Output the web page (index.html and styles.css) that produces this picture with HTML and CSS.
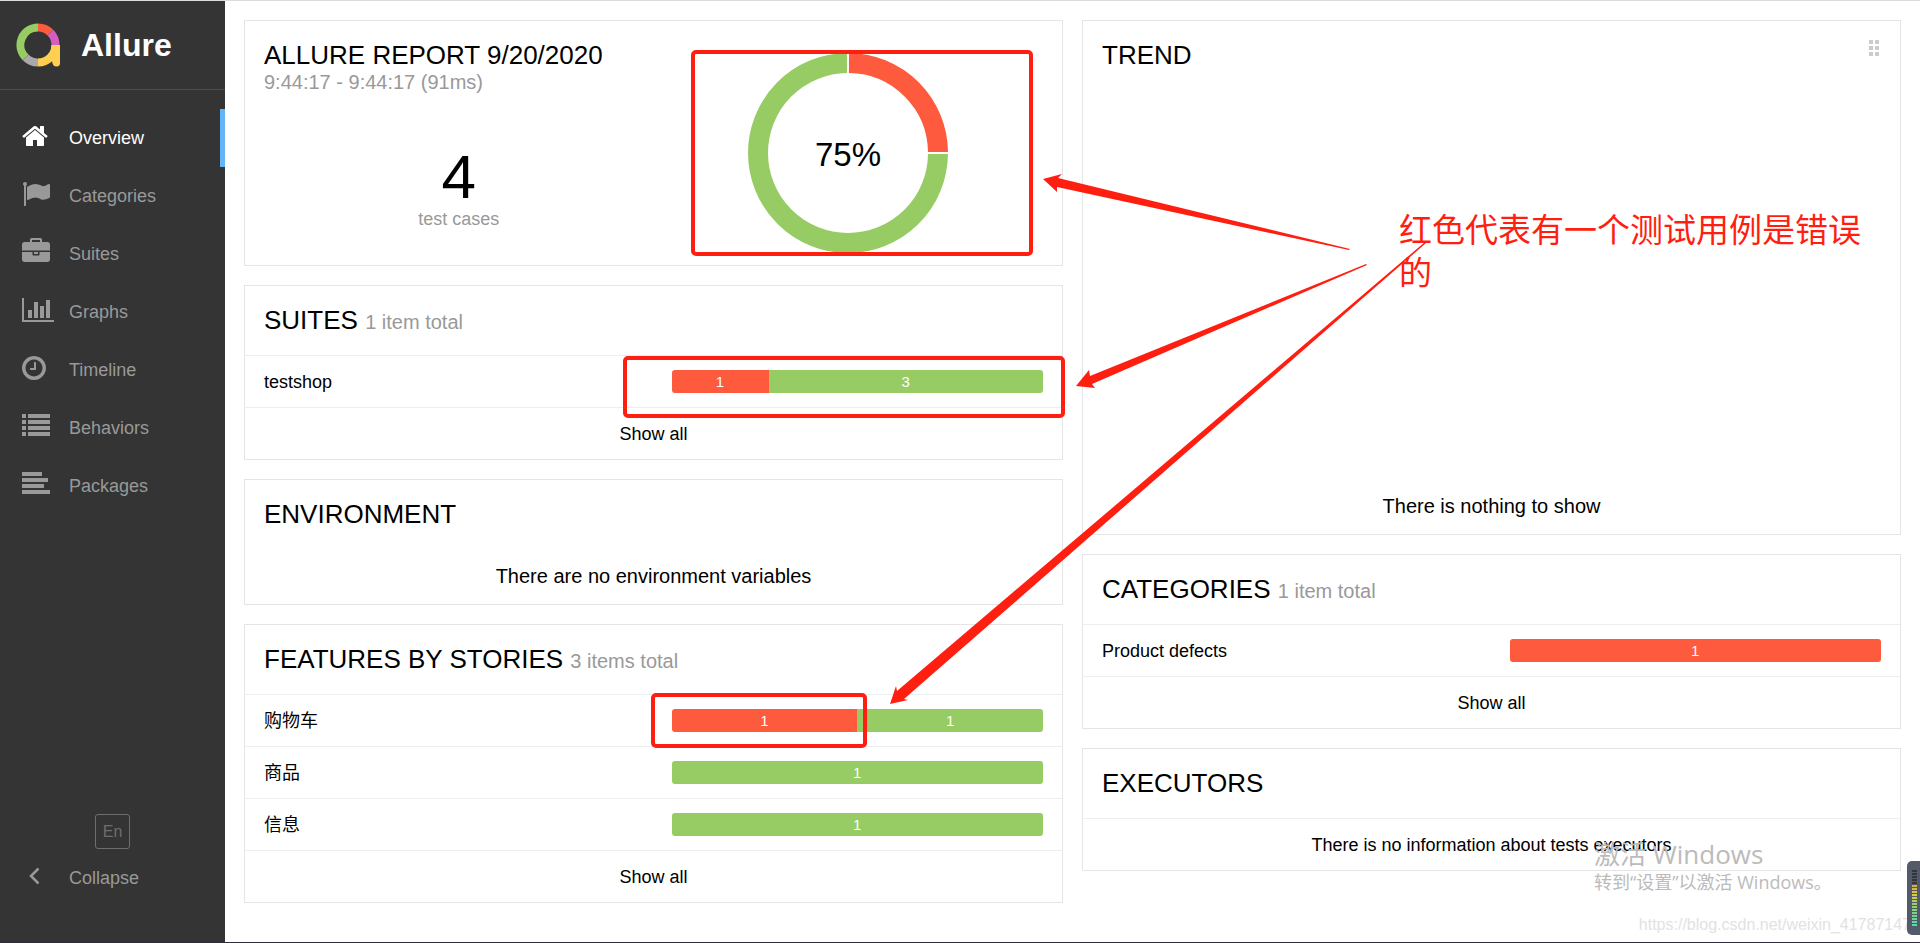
FILE: index.html
```html
<!DOCTYPE html>
<html lang="en">
<head>
    <meta charset="UTF-8">
    <meta name="viewport" content="width=device-width, initial-scale=1.0">
    <title>Allure Report</title>
    <link rel="stylesheet" href="styles.css">
</head>
<body>
    <aside class="side-nav">
        <a class="brand" href="#">
            <svg class="brand-logo" viewBox="0 0 44 44" fill="none" stroke-width="8">
                <path stroke="#97cc64" d="M22 4.500A17.500 17.500 0 0 0 9.600 34.400"/>
                <path stroke="#aaaaaa" d="M9.600 34.400A17.500 17.500 0 0 0 22 39.500"/>
                <path stroke="#ffd050" d="M22 39.500A17.500 17.500 0 0 0 39.500 22"/>
                <path stroke="#fd5a3e" d="M22 4.500A17.500 17.500 0 0 1 34.400 9.600"/>
                <path stroke="#d35ebe" d="M34.400 9.600A17.500 17.500 0 0 1 39.500 22"/>
                <path fill="#ffd050" d="M35.500 22H44V40Q44 43.500 40.500 43.500Q36.500 43.500 36 38L34 34Z"/>
            </svg>
            <span class="brand-text">Allure</span>
        </a>
        <nav class="menu">
            <a class="menu-item active" href="#">
                <svg class="icon" viewBox="64 0 1792 1792"><path d="M1472 992v480q0 26-19 45t-45 19h-384v-384h-256v384h-384q-26 0-45-19t-19-45v-480q0-1 .5-3t.5-3l575-474 575 474q1 2 1 6zm223-69l-62 74q-8 9-21 11h-3q-13 0-21-7l-692-577-692 577q-12 8-24 7-13-2-21-11l-62-74q-8-10-7-23.500t11-21.500l719-599q32-26 76-26t76 26l244 204v-195q0-14 9-23t23-9h192q14 0 23 9t9 23v408l219 182q10 8 11 21.500t-7 23.500z"/></svg>
                <span>Overview</span>
            </a>
            <a class="menu-item" href="#categories">
                <svg class="icon" viewBox="0 0 1792 1792"><path d="M320 256q0 72-64 110v1266q0 13-9.500 22.500t-22.500 9.500h-64q-13 0-22.500-9.500t-9.500-22.500v-1266q-64-38-64-110 0-53 37.500-90.500t90.500-37.500 90.500 37.500 37.500 90.500zm1472 64v763q0 25-12.500 38.500t-39.500 27.500q-215 116-369 116-61 0-123.500-22t-108.500-48-115.500-48-142.500-22q-192 0-464 146-17 9-33 9-26 0-45-19t-19-45v-742q0-32 31-55 21-14 79-43 236-120 421-120 107 0 200 29t219 88q38 19 88 19 54 0 117.500-21t110-47 88-47 54.500-21q26 0 45 19t19 45z"/></svg>
                <span>Categories</span>
            </a>
            <a class="menu-item" href="#suites">
                <svg class="icon" viewBox="0 0 1792 1792"><path d="M640 256h512v-128h-512v128zm1152 640v480q0 66-47 113t-113 47h-1472q-66 0-113-47t-47-113v-480h672v160q0 26 19 45t45 19h320q26 0 45-19t19-45v-160h672zm-768 0v128h-256v-128h256zm768-480v384h-1792v-384q0-66 47-113t113-47h352v-160q0-40 28-68t68-28h576q40 0 68 28t28 68v160h352q66 0 113 47t47 113z"/></svg>
                <span>Suites</span>
            </a>
            <a class="menu-item" href="#graph">
                <svg class="icon" viewBox="0 0 1792 1792"><path d="M640 896v512h-256v-512h256zm384-512v1024h-256v-1024h256zm1024 1152v128h-2048v-1536h128v1408h1920zm-640-896v768h-256v-768h256zm384-384v1152h-256v-1152h256z"/></svg>
                <span>Graphs</span>
            </a>
            <a class="menu-item" href="#timeline">
                <svg class="icon" viewBox="128 0 1792 1792"><path d="M1024 544v448q0 14-9 23t-23 9h-320q-14 0-23-9t-9-23v-64q0-14 9-23t23-9h224v-352q0-14 9-23t23-9h64q14 0 23 9t9 23zm416 352q0-148-73-273t-198-198-273-73-273 73-198 198-73 273 73 273 198 198 273 73 273-73 198-198 73-273zm224 0q0 209-103 385.500t-279.500 279.500-385.500 103-385.500-103-279.500-279.500-103-385.500 103-385.500 279.500-279.500 385.500-103 385.500 103 279.500 279.500 103 385.500z"/></svg>
                <span>Timeline</span>
            </a>
            <a class="menu-item" href="#behaviors">
                <svg class="icon" viewBox="0 0 1792 1792"><path d="M0 128h256v256H0zM384 128h1408v256H384zM0 512h256v256H0zM384 512h1408v256H384zM0 896h256v256H0zM384 896h1408v256H384zM0 1280h256v256H0zM384 1280h1408v256H384z"/></svg>
                <span>Behaviors</span>
            </a>
            <a class="menu-item" href="#packages">
                <svg class="icon" viewBox="0 0 1792 1792"><path d="M0 128h1280v256H0zM0 512h1664v256H0zM0 896h1408v256H0zM0 1280h1792v256H0z"/></svg>
                <span>Packages</span>
            </a>
        </nav>
        <div class="side-footer">
            <button type="button" class="lang-btn">En</button>
            <button type="button" class="menu-item">
                <svg class="icon" viewBox="0 0 28 28"><path d="M16.500 6.500L9 14L16.500 21.500" fill="none" stroke="currentColor" stroke-width="2.500"/></svg>
                <span>Collapse</span>
            </button>
        </div>
    </aside>

    <main class="content">
        <div class="column">
            <section class="card summary">
                <div class="summary-info">
                    <h2 class="card-title">ALLURE REPORT 9/20/2020</h2>
                    <div class="subtitle">9:44:17 - 9:44:17 (91ms)</div>
                    <div class="stat">
                        <div class="stat-value">4</div>
                        <div class="stat-label">test cases</div>
                    </div>
                </div>
                <div class="summary-chart">
                    <svg class="donut" viewBox="0 0 200 200" fill="none" stroke-width="20">
                        <path stroke="#fd5a3e" d="M101 10A90 90 0 0 1 190 99"/>
                        <path stroke="#97cc64" d="M190 101A90 90 0 1 1 99 10"/>
                        <text class="donut-text" x="100" y="113">75%</text>
                    </svg>
                </div>
            </section>

            <section class="card">
                <h2 class="card-title">SUITES <small>1 item total</small></h2>
                <a class="row" href="#suites/testshop">
                    <span>testshop</span>
                    <span class="bar">
                        <span class="failed" style="flex-grow: 1">1</span>
                        <span class="passed" style="flex-grow: 3">3</span>
                    </span>
                </a>
                <a class="row row-center" href="#suites">Show all</a>
            </section>

            <section class="card">
                <h2 class="card-title">ENVIRONMENT</h2>
                <p class="message">There are no environment variables</p>
            </section>

            <section class="card">
                <h2 class="card-title">FEATURES BY STORIES <small>3 items total</small></h2>
                <a class="row" href="#behaviors/1">
                    <span>购物车</span>
                    <span class="bar">
                        <span class="failed" style="flex-grow: 1">1</span>
                        <span class="passed" style="flex-grow: 1">1</span>
                    </span>
                </a>
                <a class="row" href="#behaviors/2">
                    <span>商品</span>
                    <span class="bar"><span class="passed" style="flex-grow: 1">1</span></span>
                </a>
                <a class="row" href="#behaviors/3">
                    <span>信息</span>
                    <span class="bar"><span class="passed" style="flex-grow: 1">1</span></span>
                </a>
                <a class="row row-center" href="#behaviors">Show all</a>
            </section>
        </div>

        <div class="column">
            <section class="card trend">
                <div class="card-head">
                    <h2 class="card-title">TREND</h2>
                    <svg class="handle" viewBox="0 0 11 17"><path d="M0 0h4v4H0zM6 0h4v4H6zM0 6h4v4H0zM6 6h4v4H6zM0 12h4v4H0zM6 12h4v4H6z"/></svg>
                </div>
                <p class="message">There is nothing to show</p>
            </section>

            <section class="card">
                <h2 class="card-title">CATEGORIES <small>1 item total</small></h2>
                <a class="row" href="#categories/1">
                    <span>Product defects</span>
                    <span class="bar"><span class="failed" style="flex-grow: 1">1</span></span>
                </a>
                <a class="row row-center" href="#categories">Show all</a>
            </section>

            <section class="card">
                <h2 class="card-title">EXECUTORS</h2>
                <div class="row row-center">There is no information about tests executors</div>
            </section>
        </div>
    </main>

    <!-- notes drawn over the report -->
    <svg class="marks" viewBox="0 0 1920 943" preserveAspectRatio="xMinYMin meet">
        <g fill="none" stroke="#ff1f10" stroke-width="4">
            <rect x="693" y="52" width="338" height="202" rx="3"/>
            <rect x="625" y="358" width="438" height="58" rx="3"/>
            <rect x="653" y="695" width="212" height="51" rx="3"/>
        </g>
        <g fill="#ff1f10">
            <path d="M1043 179L1062 174L1058 178L1350 249L1349 250L1057 187L1057 192Z"/>
            <path d="M1076 386L1089 370L1090 376L1366 264L1367 265L1092 384L1095 388Z"/>
            <path d="M890 704L896 686L897 691L1425 242L1426 243L904 699L908 700Z"/>
        </g>
    </svg>
    <p class="note">红色代表有一个测试用例是错误的</p>

    <div class="activate">
        <div class="activate-title">激活 Windows</div>
        <div class="activate-text">转到“设置”以激活 Windows。</div>
    </div>
    <div class="watermark">https://blog.csdn.net/weixin_41787147</div>
    <div class="meter"><div class="meter-level"></div></div>
</body>
</html>
```
FILE: styles.css
```css
* {
    box-sizing: border-box;
}
body {
    position: relative;
    display: flex;
    min-height: 100vh;
    margin: 0;
    border-top: 1px solid #dcdce0;
    border-bottom: 1px solid #2d2c3c;
    font-family: "Liberation Sans", Arial, "Noto Sans CJK SC", sans-serif;
    font-size: 18px;
    line-height: 24px;
    color: #000;
    background-color: #fff;
    overflow-x: hidden;
}
a {
    color: inherit;
    text-decoration: none;
}

/* sidebar */
.side-nav {
    display: flex;
    flex-direction: column;
    flex-shrink: 0;
    width: 225px;
    background-color: #343434;
    color: #999;
}
.brand {
    display: flex;
    align-items: center;
    gap: 21px;
    height: 89px;
    padding: 0 16px;
    border-bottom: 1px solid #4d4d4d;
}
.brand-logo {
    width: 44px;
    height: 44px;
}
.brand-text {
    font-size: 32px;
    font-weight: bold;
    color: #fff;
}
.menu {
    flex: 1;
    padding-top: 19px;
}
.menu-item {
    display: flex;
    align-items: center;
    gap: 19px;
    width: 100%;
    height: 58px;
    padding: 0 0 0 22px;
    border: 0;
    background: none;
    color: inherit;
    font: inherit;
    cursor: pointer;
}
.menu-item.active {
    border-right: 5px solid #64b5f6;
    color: #fff;
}
.icon {
    width: 28px;
    height: 28px;
    margin-bottom: 4px;
    fill: currentColor;
    overflow: visible;
}
.side-footer {
    padding-bottom: 35px;
}
.lang-btn {
    display: block;
    width: 35px;
    height: 35px;
    margin: 0 auto;
    padding: 0;
    border: 1px solid #6e6e6e;
    border-radius: 3px;
    background: none;
    color: #6e6e6e;
    font-family: inherit;
    font-size: 16px;
    cursor: pointer;
}

/* widgets */
.content {
    display: flex;
    flex: 1;
    align-items: flex-start;
    gap: 19px;
    padding: 19px;
}
.column {
    display: flex;
    flex: 1;
    flex-direction: column;
    gap: 19px;
}
.card {
    border: 1px solid #e5e5e5;
    background-color: #fff;
}
.card-title {
    margin: 0;
    padding: 20px 19px 21px;
    font-size: 26px;
    font-weight: normal;
    line-height: 28px;
}
.card-title small {
    font-size: 20px;
    line-height: 20px;
    color: #999;
}
.card-head {
    display: flex;
    justify-content: space-between;
}
.handle {
    width: 11px;
    height: 17px;
    margin: 19px 20px;
    fill: #ccc;
}
.row {
    display: flex;
    align-items: center;
    justify-content: space-between;
    height: 52px;
    padding: 0 19px;
    border-top: 1px solid #eceff1;
}
.row-center {
    justify-content: center;
}
.bar {
    display: flex;
    width: calc(50% - 18px);
    border-radius: 3px;
    overflow: hidden;
    font-size: 15px;
    line-height: 23px;
    text-align: center;
    color: #fff;
}
.failed {
    background-color: #fd5a3e;
}
.passed {
    background-color: #97cc64;
}
.message {
    margin: 0;
    padding: 15px 19px 16px;
    font-size: 20px;
    text-align: center;
}
.trend {
    display: flex;
    flex-direction: column;
    justify-content: space-between;
    min-height: 515px;
}

/* summary */
.summary {
    display: flex;
}
.summary-info,
.summary-chart {
    width: 50%;
}
.summary .card-title {
    padding-bottom: 0;
}
.subtitle {
    padding-left: 19px;
    font-size: 20px;
    line-height: 26px;
    color: #999;
}
.stat {
    padding-top: 52px;
    padding-left: 19px;
    text-align: center;
}
.stat-value {
    font-size: 62px;
    line-height: 60px;
}
.stat-label {
    color: #999;
}
.summary-chart {
    padding: 32px 19px 12px 0;
}
.donut {
    display: block;
    width: 200px;
    height: 200px;
    margin: 0 auto;
}
.donut-text {
    fill: #000;
    stroke: none;
    font-size: 33px;
    text-anchor: middle;
}

/* notes over the page */
.marks {
    position: absolute;
    top: -1px;
    left: 0;
    width: 100%;
    pointer-events: none;
}
.note {
    position: absolute;
    top: 208px;
    left: 1399px;
    width: 470px;
    margin: 0;
    font-size: 33px;
    line-height: 43px;
    color: #ff1f10;
}
.activate {
    position: absolute;
    right: 94px;
    bottom: 48px;
    width: 232px;
    font-family: "Open Sans", "Noto Sans CJK SC", sans-serif;
    color: #bbb;
    white-space: nowrap;
}
.activate-title {
    font-size: 26px;
    line-height: 32px;
}
.activate-text {
    font-size: 18px;
}
.watermark {
    position: absolute;
    right: 9px;
    bottom: 5px;
    font-size: 16px;
    color: #e2e2e2;
}
.meter {
    position: absolute;
    right: 0;
    bottom: 7px;
    width: 13px;
    height: 74px;
    padding: 9px 3px 8px 5px;
    border-radius: 5px 0 0 5px;
    background-color: #535a69;
}
.meter-level {
    height: 100%;
    background:
        repeating-linear-gradient(transparent 0 2px, #535a69 2px 3px),
        linear-gradient(#33363f 26%, #d9a93f 26%, #d2cf4c 45%, #8fcf74 65%, #55d6b4);
}
```
